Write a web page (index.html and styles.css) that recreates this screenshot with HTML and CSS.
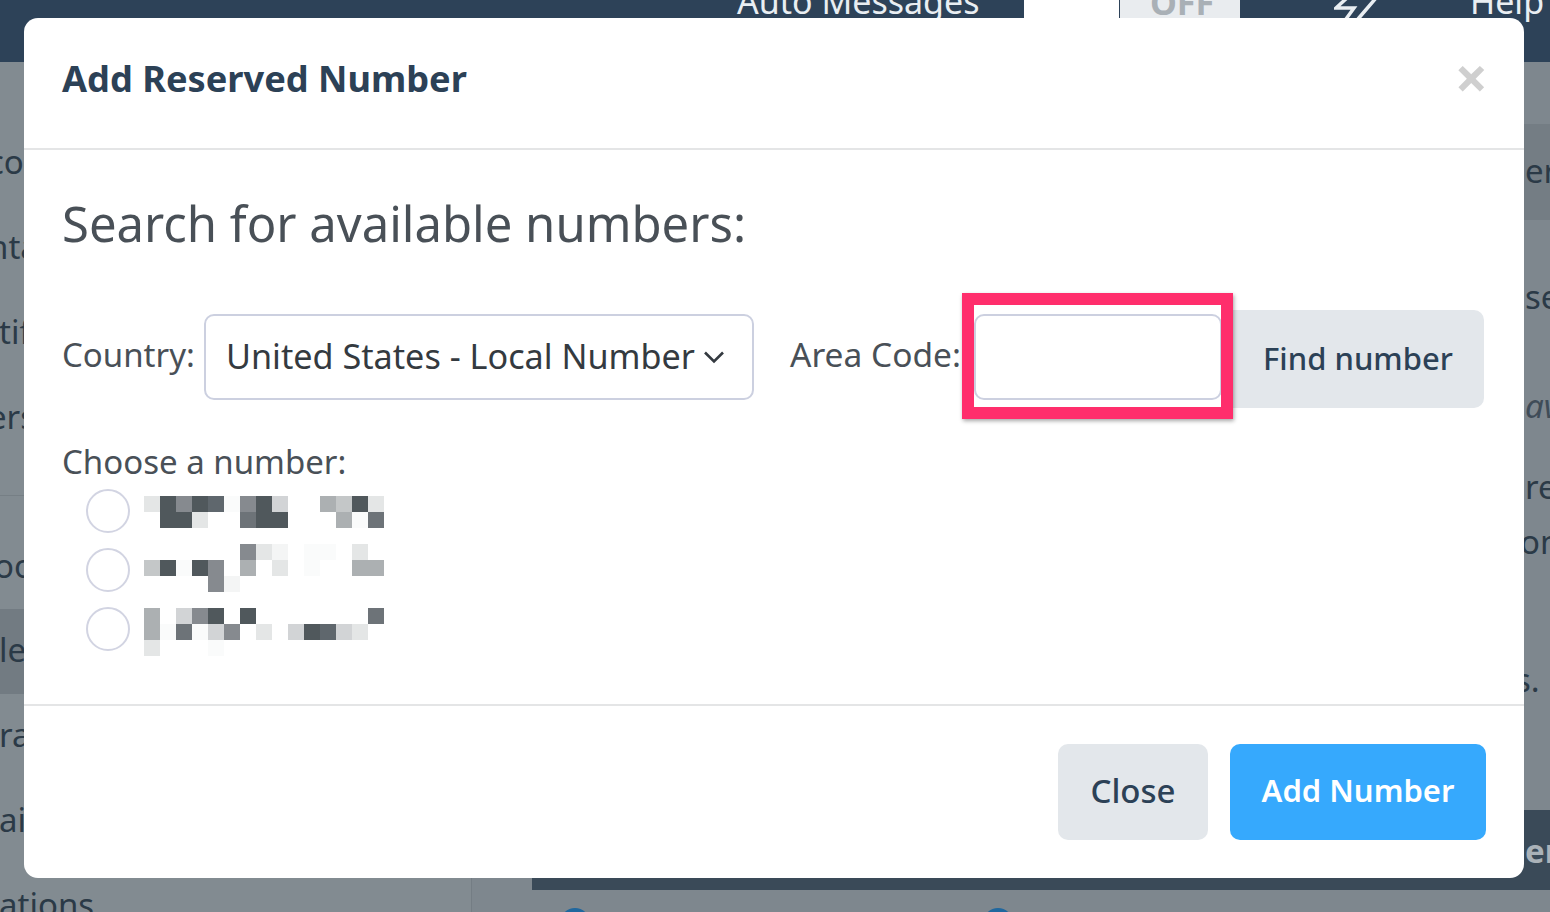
FILE: index.html
```html
<!DOCTYPE html>
<html lang="en">
<head>
<meta charset="utf-8">
<title>Add Reserved Number</title>
<link rel="stylesheet" href="styles.css">
</head>
<body>
<div class="page">
  <nav class="nav">
    <span class="nav-link auto">Auto Messages</span>
    <span class="toggle"><span class="toggle-on"></span><span class="toggle-off">OFF</span></span>
    <svg class="bolt" width="44" height="30" viewBox="0 0 44 30" fill="none" stroke="#e9eef2" stroke-width="3.5"><path d="M14 -3 L2 8 H20 L12 19 M42 -2 L24 19"/></svg>
    <span class="nav-link help">Help</span>
  </nav>
  <div class="under">
    <aside class="side">
      <div class="side-item cut">cou</div>
      <div class="side-item cut">nta</div>
      <div class="side-item">tif</div>
      <div class="side-item cut">ers</div>
      <div class="side-item tall">oo</div>
      <div class="side-item active">le</div>
      <div class="side-item">ra</div>
      <div class="side-item">ai</div>
      <div class="side-item">ations</div>
    </aside>
    <div class="side-line"></div>
    <main class="content">
      <div class="right-strip">
        <div class="r r1">er</div>
        <div class="r r2">se</div>
        <div class="r r3">av</div>
        <div class="r r4">re</div>
        <div class="r r5">on</div>
        <div class="r r6">s.</div>
      </div>
      <div class="band"><span class="band-text">er</span></div>
      <div class="dots"><span class="dot"></span><span class="dot"></span></div>
    </main>
  </div>
</div>

<div class="modal">
  <header class="modal-head">
    <h2 class="modal-title">Add Reserved Number</h2>
    <span class="modal-x">×</span>
  </header>
  <section class="modal-body">
    <h3 class="search-title">Search for available numbers:</h3>
    <div class="search-row">
      <label class="lbl lbl-country">Country:</label>
      <div class="select">
        <span class="select-text">United States - Local Number</span>
        <svg class="chev" width="22" height="14" viewBox="0 0 22 14" fill="none" stroke="#343a40" stroke-width="2.6"><path d="M2 2.5 L11 11.5 L20 2.5"/></svg>
      </div>
      <label class="lbl lbl-area">Area Code:</label>
      <div class="input-wrap">
        <div class="input"></div>
        <div class="find">Find number</div>
        <div class="highlight"></div>
      </div>
    </div>
    <div class="choose">Choose a number:</div>
    <div class="radio-list">
      <div class="radio-row">
        <span class="radio"></span>
        <div class="pix">
          <i class="g8"></i><i class="g1"></i><i class="g4"></i><i class="g1"></i><i class="g2"></i><i class="g10"></i><i class="g4"></i><i class="g1"></i><i class="g7"></i><i></i><i></i><i class="g5"></i><i class="g6"></i><i class="g1"></i><i class="g8"></i>
          <i></i><i class="g1"></i><i class="g1"></i><i class="g8"></i><i></i><i></i><i class="g3"></i><i class="g1"></i><i class="g1"></i><i></i><i></i><i></i><i class="g5"></i><i class="g10"></i><i class="g3"></i>
        </div>
      </div>
      <div class="radio-row">
        <span class="radio"></span>
        <div class="pix">
          <i></i><i></i><i></i><i></i><i></i><i></i><i class="g4"></i><i class="g8"></i><i class="g9"></i><i></i><i class="g10"></i><i class="g10"></i><i></i><i class="g8"></i><i></i>
          <i class="g6"></i><i class="g1"></i><i class="g10"></i><i class="g1"></i><i class="g4"></i><i></i><i class="g5"></i><i></i><i class="g8"></i><i></i><i class="g10"></i><i></i><i></i><i class="g5"></i><i class="g5"></i>
          <i></i><i></i><i></i><i></i><i class="g4"></i><i class="g9"></i><i></i><i></i><i></i><i></i><i></i><i></i><i></i><i></i><i></i>
        </div>
      </div>
      <div class="radio-row">
        <span class="radio"></span>
        <div class="pix">
          <i class="g5"></i><i></i><i class="g7"></i><i class="g4"></i><i class="g1"></i><i></i><i class="g1"></i><i></i><i></i><i></i><i></i><i></i><i></i><i></i><i class="g3"></i>
          <i class="g5"></i><i class="g10"></i><i class="g3"></i><i class="g10"></i><i class="g7"></i><i class="g4"></i><i></i><i class="g8"></i><i></i><i class="g7"></i><i class="g1"></i><i class="g2"></i><i class="g7"></i><i class="g8"></i><i></i>
          <i class="g8"></i><i></i><i></i><i></i><i class="g10"></i><i></i><i></i><i></i><i></i><i></i><i></i><i></i><i></i><i></i><i></i>
        </div>
      </div>
    </div>
  </section>
  <footer class="modal-foot">
    <button class="btn btn-close">Close</button>
    <button class="btn btn-add">Add Number</button>
  </footer>
</div>
</body>
</html>
```

FILE: styles.css
```css
* { box-sizing: border-box; }
html, body { margin: 0; height: 912px; overflow: hidden; }
body { font-family: "Noto Sans", "Lato", sans-serif; background: #7e878e; position: relative; }

.page { width: 1550px; height: 912px; display: flex; flex-direction: column; overflow: hidden; }

.nav { height: 62px; flex: none; background: #2d4258; display: flex; align-items: flex-start; color: #e9eef2; font-size: 34px; line-height: 20px; padding-left: 737px; }
.nav-link { margin-top: -9px; white-space: nowrap; }
.auto { width: 287px; }
.toggle { display: flex; height: 30px; }
.toggle-on { width: 95px; background: #fff; }
.toggle-off { width: 120px; margin-left: 1px; background: #e9ecef; color: #a9b0b6; font-weight: 700; text-align: center; line-height: 4px; padding-left: 4px; }
.bolt { margin-left: 94px; }
.help { margin-left: 92px; }

.under { flex: 1; min-height: 0; display: flex; color: #2b3a47; font-size: 33px; }
.side { width: 471px; flex: none; padding-top: 59px; background: #828b91; overflow: hidden; }
.side-item { height: 85px; line-height: 81px; white-space: nowrap; text-indent: -1px; }
.side-item.cut { text-indent: -12px; }
.side-item.tall { height: 114px; margin-top: 34px; padding-top: 29px; border-top: 1px solid #767f85; text-indent: -6px; }
.side-item.active { background: #727b82; }
.side-line { width: 1px; background: #747d84; flex: none; }
.content { flex: 1; min-width: 0; display: flex; flex-direction: column; margin-left: 60px; overflow: hidden; }
.right-strip { flex: 1; min-height: 0; display: flex; flex-direction: column; align-items: flex-end; }
.r { width: 25px; height: 40px; line-height: 37px; white-space: nowrap; overflow: hidden; flex: none; }
.r1 { height: 96px; line-height: 94px; margin-top: 62px; width: 1018px; padding-left: 993px; background: #747d84; }
.r2 { margin-top: 58px; }
.r3 { margin-top: 69px; font-style: italic; color: #3f4c58; }
.r4 { margin-top: 41px; }
.r5 { margin-top: 15px; width: 30px; }
.r6 { margin-top: 97px; width: 35px; line-height: 40px; }
.band { height: 80px; flex: none; background: #3a4a58; display: flex; justify-content: flex-end; align-items: center; color: #aab2b8; font-weight: 700; }
.band-text { width: 25px; white-space: nowrap; overflow: hidden; }
.dots { height: 22px; flex: none; display: flex; padding: 18px 0 0 28px; gap: 393px; overflow: hidden; }
.dot { width: 30px; height: 30px; border-radius: 50%; background: #20679e; flex: none; }

.modal { position: absolute; left: 24px; top: 18px; width: 1500px; height: 860px; background: #fff; border-radius: 14px; display: flex; flex-direction: column; }
.modal-head { height: 132px; flex: none; border-bottom: 2px solid #e4e5e6; display: flex; align-items: flex-start; justify-content: space-between; padding: 37px 38px 0; }
.modal-title { margin: 0; font-size: 36.2px; line-height: 46px; font-weight: 700; color: #2c4156; }
.modal-x { font-size: 58px; line-height: 46px; font-weight: 700; color: #cfcfcf; margin: -1px -2px 0 0; }

.modal-body { flex: 1; padding: 0 38px; color: #495057; }
.search-title { margin: 43px 0 0; font-size: 49px; line-height: 60px; font-weight: 400; color: #495057; }
.search-row { display: flex; align-items: flex-start; margin-top: 61px; }
.lbl { font-size: 33px; line-height: 40px; margin-top: 21px; white-space: nowrap; }
.lbl-country { width: 142px; }
.lbl-area { width: 184px; margin-left: 36px; font-size: 33.5px; margin-top: 20px; }
.select { width: 550px; height: 86px; border: 2px solid #ccd0e0; border-radius: 10px; display: flex; align-items: center; padding: 0 27px 4px 20px; justify-content: space-between; }
.select-text { font-size: 34.2px; color: #343a40; white-space: nowrap; }
.chev { margin-top: 4px; }
.input-wrap { position: relative; display: flex; align-items: flex-start; }
.input { width: 248px; height: 86px; border: 2px solid #ccd0e0; border-radius: 10px; background: #fff; }
.find { width: 262px; height: 98px; background: #e3e7eb; border-radius: 0 10px 10px 0; color: #2c4156; font-size: 31px; font-weight: 500; display: flex; align-items: center; padding: 0 0 2px 41px; margin-top: -4px; }
.highlight { position: absolute; left: -12px; top: -21px; width: 271px; height: 126px; border: 12px solid #ff2e6c; box-shadow: 1px 2px 4px rgba(0,0,0,.35); }

.choose { font-size: 33px; line-height: 40px; margin-top: 34px; }
.radio-list { display: flex; flex-direction: column; gap: 15px; margin-left: 24px; }
.radio-row { display: flex; align-items: flex-start; height: 44px; }
.radio { width: 44px; height: 44px; border: 2px solid #d2d4e2; border-radius: 50%; flex: none; margin-top: 7px; }
.pix { display: grid; grid-template-columns: repeat(15, 16px); grid-auto-rows: 16px; margin: 14px 0 0 14px; }
.radio-row:nth-child(2) .pix { margin-top: 3px; }
.radio-row:nth-child(3) .pix { margin-top: 8px; }
.g1 { background: #50585c; }
.g2 { background: #5f676d; }
.g3 { background: #6d7378; }
.g4 { background: #868a8f; }
.g5 { background: #acb0b2; }
.g6 { background: #c4c7c8; }
.g7 { background: #d2d4d6; }
.g8 { background: #e4e6e6; }
.g9 { background: #f4f5f5; }
.g10 { background: #fafbfb; }

.modal-foot { height: 174px; flex: none; border-top: 2px solid #e4e5e6; display: flex; justify-content: flex-end; align-items: flex-start; gap: 22px; padding: 38px 38px 0 0; }
.btn { height: 96px; border: 0; border-radius: 10px; font-family: inherit; font-size: 33px; padding: 0 0 4px; font-weight: 500; }
.btn-close { width: 150px; background: #e3e7eb; color: #2c4156; }
.btn-add { width: 256px; background: #36a9fd; color: #fff; font-size: 31px; font-weight: 600; }
```
